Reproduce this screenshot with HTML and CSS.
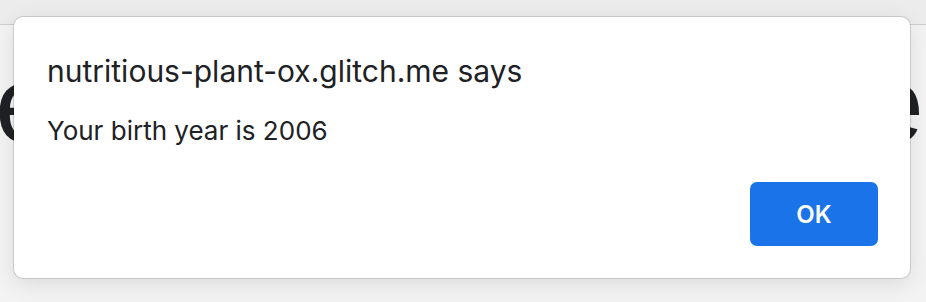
FILE: index.html
```html
<!DOCTYPE html>
<html lang="en">
<head>
<meta charset="utf-8">
<title>Alert</title>
<link rel="stylesheet" href="styles.css">
</head>
<body>
  <div class="tabstrip"></div>
  <main class="page">
    <span class="big-letter big-letter-left">e</span>
    <span class="big-letter big-letter-right">e</span>
  </main>
  <div class="dialog" role="alertdialog">
    <div class="dialog-title">nutritious-plant-ox.glitch.me says</div>
    <div class="dialog-message">Your birth year is 2006</div>
    <div class="dialog-actions">
      <button class="btn-ok" type="button">OK</button>
    </div>
  </div>
</body>
</html>
```

FILE: styles.css
```css
html, body {
  margin: 0;
  padding: 0;
}
body {
  width: 926px;
  height: 302px;
  overflow: hidden;
  background: #f3f3f3;
  font-family: Inter, "Noto Sans", sans-serif;
  color: #202124;
  position: relative;
}
.tabstrip {
  height: 24px;
  background: #ececec;
  border-bottom: 1px solid #cdcdcd;
}
.page {
  display: flex;
  justify-content: space-between;
  margin-top: 24px;
  font-family: "Liberation Sans", Arial, sans-serif;
  font-size: 110px;
  line-height: 110px;
  color: #1f2124;
}
.big-letter-left {
  margin-left: -5px;
}
.big-letter-right {
  margin-right: 2px;
}
.dialog {
  position: absolute;
  left: 14px;
  top: 17px;
  width: 896px;
  box-sizing: border-box;
  padding: 36px 32px 32px 33px;
  background: #ffffff;
  border-radius: 9px;
  box-shadow: 0 0 0 1px rgba(0, 0, 0, 0.13), 0 6px 22px rgba(0, 0, 0, 0.10);
}
.dialog-title {
  font-size: 30px;
  line-height: 36px;
  font-weight: 400;
}
.dialog-message {
  margin-top: 26px;
  font-size: 26px;
  line-height: 32px;
}
.dialog-actions {
  display: flex;
  justify-content: flex-end;
  margin-top: 35px;
}
.btn-ok {
  width: 128px;
  height: 64px;
  border: none;
  border-radius: 7px;
  background: #1a73e8;
  color: #ffffff;
  font-family: Inter, "Noto Sans", sans-serif;
  font-size: 24px;
  font-weight: 600;
  padding: 0;
}
```
